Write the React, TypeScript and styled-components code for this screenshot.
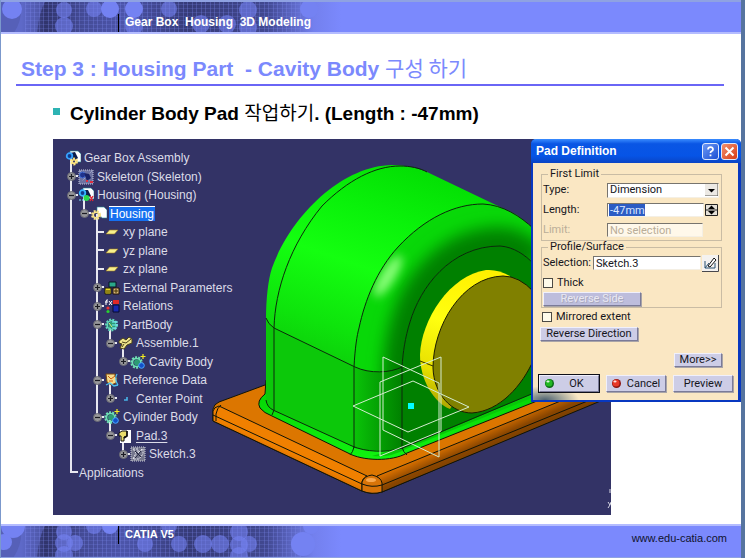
import React, { useState } from "react";
import styled, { createGlobalStyle, css } from "styled-components";

const GlobalStyle = createGlobalStyle`
  *, *::before, *::after { box-sizing: border-box; }
  body {
    margin: 0;
    background: #fff;
    font-family: "Liberation Sans", "Noto Sans CJK KR", sans-serif;
  }
`;

/* ---------- slide frame ---------- */

const Slide = styled.div`
  display: flex;
  flex-direction: column;
  min-height: 100vh;
  background: #fff;
  border-left: 1px solid #7b98cc;
  border-right: 4px solid #56749f;
`;

const band = css`
  display: grid;
  height: 34px;
  flex: none;
  background: #7b89fd;
  overflow: hidden;
  > * { grid-area: 1 / 1; }
`;

const Header = styled.header`
  ${band}
  border-top: 2px solid #8fa2e2;
  border-bottom: 2px solid #b4bcff;
`;

const Footer = styled.footer`
  ${band}
  margin-top: auto;
  border-top: 2px solid #b4bcff;
  border-bottom: 1px solid #8fa2e2;
`;

const BandArt = styled.svg`
  display: block;
  width: 340px;
  height: 32px;
`;

const BandContent = styled.div`
  z-index: 1;
  display: flex;
  justify-content: space-between;
  padding: 0 14px 0 117px;
`;

const BandTitle = styled.p<{ $offset: number; $size: number }>`
  margin: ${(p) => p.$offset}px 0 0;
  padding-left: 6px;
  height: 18px;
  border-left: 1px solid #000;
  color: #fff;
  font-size: ${(p) => p.$size}px;
  line-height: 16px;
  font-weight: 700;
  white-space: pre;
`;

const SiteLink = styled.a`
  margin-top: 5px;
  color: #10132e;
  font-size: 11px;
  line-height: 14px;
  text-decoration: none;
`;

const TitleBar = styled.h1`
  margin: 18px 17px 0 15px;
  padding: 0 0 0 5px;
  height: 34px;
  border-bottom: 2px solid #6a66f6;
  color: #7b89fd;
  font-size: 21px;
  line-height: 30px;
  font-weight: 700;
  white-space: pre;
`;

const Korean = styled.span`
  font-family: "Noto Sans CJK KR", sans-serif;
  font-weight: 400;
`;

const Bullet = styled.h2`
  display: flex;
  align-items: center;
  gap: 10px;
  margin: 15px 0 0 52px;
  height: 24px;
  color: #000;
  font-size: 19px;
  line-height: 24px;
  font-weight: 700;
  white-space: pre;
  &::before {
    content: "";
    width: 7px;
    height: 7px;
    margin-bottom: 4px;
    background: #2db3b3;
  }
`;

const Stage = styled.main`
  position: relative;
  margin-top: 14px;
  margin-bottom: 9px;
`;

const Viewport = styled.section`
  position: relative;
  margin: 0 130px 0 52px;
  padding: 10px 0 33px 12px;
  background: #333366;
  overflow: hidden;
`;

const Scene = styled.svg`
  position: absolute;
  inset: 0;
  width: 100%;
  height: 100%;
`;

/* ---------- specification tree ---------- */

const Tree = styled.ul`
  position: relative;
  margin: 0;
  padding: 0;
  list-style: none;
  color: #dcdce8;
  font-size: 12px;
`;

const Row = styled.li`
  display: flex;
  align-items: center;
  height: 18px;
  &:nth-child(even) { height: 19px; }
`;

const Guide = styled.span<{ $up: boolean; $down: boolean; $tick: boolean }>`
  display: grid;
  place-items: center;
  width: 13px;
  height: 100%;
  flex: none;
  background-repeat: no-repeat;
  background-image: linear-gradient(#e8e8f0, #e8e8f0), linear-gradient(#e8e8f0, #e8e8f0);
  background-size:
    ${(p) => (p.$up ? "2px" : "0")} ${(p) => (p.$down ? "100%" : "10px")},
    ${(p) => (p.$tick ? "7px" : "0")} 2px;
  background-position: 5px 0, 100% 8px;
`;

const Handle = styled.button`
  display: block;
  width: 9px;
  height: 9px;
  padding: 0;
  border: 0;
  background: none;
  svg { display: block; }
`;

const IconCell = styled.span<{ $stem: boolean }>`
  width: 18px;
  height: 100%;
  display: flex;
  align-items: center;
  flex: none;
  background: linear-gradient(#e8e8f0, #e8e8f0) 5px 100% / ${(p) => (p.$stem ? "2px" : "0")} 9px no-repeat;
`;

const NodeName = styled.span<{ $selected?: boolean; $underlined?: boolean }>`
  padding: 0 1px;
  line-height: 14px;
  white-space: nowrap;
  ${(p) => p.$selected && css`background: #1670f0; color: #fff; border-top: 1px solid #fff;`}
  ${(p) => p.$underlined && css`text-decoration: underline; text-underline-offset: 2px;`}
`;

type IconName =
  | "assembly" | "skeleton" | "product" | "part" | "plane" | "params" | "relations"
  | "body" | "bodyPlus" | "assemble" | "geoset" | "point" | "pad" | "sketch";

const Gear = ({ x, y, r, c }: { x: number; y: number; r: number; c: string }) => (
  <g>
    <circle cx={x} cy={y} r={r} fill="none" stroke={c} strokeWidth="2" strokeDasharray="2 1.2" />
    <circle cx={x} cy={y} r={r - 1.2} fill="none" stroke={c} strokeWidth="1.6" />
  </g>
);

const Sheet = () => <path d="M5 1h8l3 3v8h-4L5 3z" fill="#fff" stroke="#2a8c94" strokeWidth=".6" />;

const icons: Record<IconName, React.ReactNode> = {
  assembly: (
    <>
      <Sheet />
      <path d="M5 3l5-1 3 6-4 3z" fill="#0b1d4a" />
      <circle cx="4.5" cy="6" r="2.8" fill="#123a8c" stroke="#36a3ff" strokeWidth="1.8" />
      <Gear x={9} y={11.5} r={3} c="#ffe680" />
    </>
  ),
  skeleton: (
    <>
      <path d="M1 1h14v14H1z" fill="#6d72a0" stroke="#c6c8de" strokeDasharray="1 1" />
      <path d="M2 2l12 12M14 2L4 12" stroke="#b0b4d4" strokeDasharray="1 1" />
      <circle cx="4.5" cy="6" r="3" fill="#20348e" stroke="#4a74d8" />
      <path d="M6 4l5 1 2 4-4 3z" fill="#1a2266" />
      <path d="M8 11h2v2H8zM12 12h3v2h-3z" fill="#e03040" />
    </>
  ),
  product: (
    <>
      <Sheet />
      <path d="M5 3h5l3 6-4 2z" fill="#0b1d4a" />
      <circle cx="4.5" cy="6" r="2.8" fill="#123a8c" stroke="#36b3ff" strokeWidth="1.8" />
      <circle cx="8.5" cy="11" r="3" fill="#28d850" />
      <path d="M12 9l3 5M15 9l-3 5" stroke="#e02838" strokeWidth="1.4" />
      <path d="M1 13h5" stroke="#7fe8ff" strokeDasharray="2 1" />
    </>
  ),
  part: (
    <>
      <path d="M6 1h7l3 3v8h-5L6 6z" fill="#fff" stroke="#2a8c94" strokeWidth=".6" />
      <Gear x={5} y={9} r={4} c="#f6e28a" />
    </>
  ),
  plane: <path d="M5.5 6H14l-3.500 4H2z" fill="#f8f08c" stroke="#9a7a20" strokeWidth=".6" />,
  params: (
    <>
      <path d="M5 2h7v5H5z" fill="#2aa88a" stroke="#081420" />
      <path d="M1 8h6v6H1z" fill="#e6d828" stroke="#201c04" />
      <path d="M9 8h6v6H9z" fill="#d8b878" stroke="#201004" />
      <path d="M3 10v3M5 10v3M11 10h2v2h-2z" stroke="#403000" fill="none" />
    </>
  ),
  relations: (
    <>
      <path d="M4 2Q2 1 2 4v3M1 4h3M5 3l3 4M8 3L5 7" stroke="#fff" fill="none" />
      <path d="M9 2h6v4H9z" fill="#e02828" />
      <path d="M9 7h6v7H9z" fill="#1828b0" stroke="#070a30" />
      <circle cx="4" cy="10" r="1.6" fill="#f03030" />
      <circle cx="4" cy="13.5" r="1.6" fill="#28d030" />
    </>
  ),
  body: (
    <>
      <Gear x={7.5} y={8} r={5.4} c="#5fd6b8" />
      <circle cx="8" cy="8" r="3.6" fill="#2c9c74" />
      <path d="M8 5h6M8 8h6M8 11h5" stroke="#7df0ff" strokeWidth="1.2" />
      <path d="M5 6l3 4" stroke="#e0f080" />
    </>
  ),
  bodyPlus: (
    <>
      <Gear x={6.5} y={8.5} r={5.2} c="#6fe0b4" />
      <circle cx="7" cy="8.5" r="3" fill="#2c9c74" />
      <circle cx="11.5" cy="11.5" r="2.8" fill="#1450c8" stroke="#4aa8ff" />
      <path d="M13 0v5M10.500 2.500h5" stroke="#f4ec20" strokeWidth="1.2" />
    </>
  ),
  assemble: (
    <>
      <path d="M2 6l4-3 3 2 3-3 3 2v4l-5 2-3 4-4-1 2-4-3-1z" fill="#efe48c" stroke="#4a4218" />
      <path d="M5 7l4 1 5-4M7 9l-2 3" stroke="#4a4218" fill="none" />
    </>
  ),
  geoset: (
    <>
      <path d="M2 2h9v3l2 1-1 5-5 2-4-3z" fill="#f6dc8c" stroke="#7c4a10" />
      <path d="M4 4l3 3 4-3M5 9h4" stroke="#d06010" fill="none" />
      <path d="M13 2q-3 5 1 11M2 13l4-2 4 3 4-1" stroke="#4cc0f0" fill="none" strokeWidth="1.3" />
    </>
  ),
  point: <path d="M10 6v3H7" stroke="#48b4e8" strokeWidth="1.6" fill="none" />,
  pad: (
    <>
      <path d="M3 2h11v13H3z" fill="#fff" />
      <path d="M2 5l3-2h5v5l-3 1v4H4V8H2z" fill="#eadf6c" stroke="#111" />
      <path d="M10 3v5l-3 2" stroke="#111" strokeWidth="1.6" fill="none" />
    </>
  ),
  sketch: (
    <>
      <path d="M1 1h14v14H1z" fill="#74768c" stroke="#d0d0dc" strokeDasharray="1 1" />
      <path d="M3 3h5v4l5-4v5l-4 5H3l3-6zM3 13l9-10" fill="none" stroke="#e8e8f0" strokeDasharray="2 1" />
      <path d="M5 5l6 6M11 5L5 12" stroke="#20223c" />
    </>
  ),
};

interface TreeNode {
  name: string;
  depth: number;
  icon?: IconName;
  handle?: "plus" | "minus";
}

const nodes: TreeNode[] = [
  { name: "Gear Box Assembly", depth: 0, icon: "assembly" },
  { name: "Skeleton (Skeleton)", depth: 1, icon: "skeleton", handle: "plus" },
  { name: "Housing (Housing)", depth: 1, icon: "product", handle: "minus" },
  { name: "Housing", depth: 2, icon: "part", handle: "minus" },
  { name: "xy plane", depth: 3, icon: "plane" },
  { name: "yz plane", depth: 3, icon: "plane" },
  { name: "zx plane", depth: 3, icon: "plane" },
  { name: "External Parameters", depth: 3, icon: "params", handle: "plus" },
  { name: "Relations", depth: 3, icon: "relations", handle: "plus" },
  { name: "PartBody", depth: 3, icon: "body", handle: "minus" },
  { name: "Assemble.1", depth: 4, icon: "assemble", handle: "minus" },
  { name: "Cavity Body", depth: 5, icon: "bodyPlus", handle: "plus" },
  { name: "Reference Data", depth: 3, icon: "geoset", handle: "minus" },
  { name: "Center Point", depth: 4, icon: "point", handle: "plus" },
  { name: "Cylinder Body", depth: 3, icon: "bodyPlus", handle: "minus" },
  { name: "Pad.3", depth: 4, icon: "pad", handle: "minus" },
  { name: "Sketch.3", depth: 5, icon: "sketch", handle: "plus" },
  { name: "Applications", depth: 1 },
];

/* True when the branch at the given depth goes on below a row. */
const continues = (row: number, depth: number) => {
  for (let i = row + 1; i < nodes.length; i++) {
    if (nodes[i].depth < depth) return false;
    if (nodes[i].depth === depth) return true;
  }
  return false;
};

const SpecTree = () => (
  <Tree aria-label="Specification tree">
    {nodes.map((n, row) => (
      <Row key={row}>
        {Array.from({ length: n.depth }, (_, i) => {
          const own = i === n.depth - 1;
          const more = continues(row, i + 1);
          return (
            <Guide key={i} $up={own || more} $down={more} $tick={own}>
              {own && n.handle && (
                <Handle type="button" aria-label={`${n.handle === "plus" ? "Expand" : "Collapse"} ${n.name}`}>
                  <svg width="9" height="9" viewBox="0 0 9 9">
                    <circle cx="4.5" cy="4.5" r="4" fill="#96969a" stroke="#6a6a72" />
                    <path d={n.handle === "plus" ? "M2 4.500h5M4.500 2v5" : "M2 4.500h5"} stroke="#1c1c24" strokeWidth="1.2" />
                  </svg>
                </Handle>
              )}
            </Guide>
          );
        })}
        {n.icon && (
          <IconCell $stem={nodes[row + 1]?.depth > n.depth}>
            <svg width="16" height="16" viewBox="0 0 16 16">{icons[n.icon]}</svg>
          </IconCell>
        )}
        <NodeName $selected={n.name === "Housing"} $underlined={n.name === "Pad.3"}>
          {n.name}
        </NodeName>
      </Row>
    ))}
  </Tree>
);

/* ---------- 3D model ---------- */

const OUTER = "M354 448V367C355 348 357 335 359 328C365 300 377 270 398 247C425 218 455 204 483 204C503 205 520 216 534 229";
const INNER = "M402 449V367C403 352 405 338 410 322C420 288 450 246 500 246C514 247 525 255 534 264";
const FILLET = `${OUTER}V264C525 255 514 247 500 246C450 246 420 288 410 322C405 338 403 352 402 367V449C385 453 365 451 354 448Z`;

const Model = () => (
  <Scene viewBox="53 139 558 376" preserveAspectRatio="xMinYMin meet" role="img" aria-label="Gear box housing model">
    <defs>
      <linearGradient id="arch" gradientUnits="userSpaceOnUse" x1="400" y1="165" x2="330" y2="370">
        <stop offset="0" stopColor="#04e004" />
        <stop offset=".25" stopColor="#0af20a" />
        <stop offset=".5" stopColor="#14ff10" />
        <stop offset=".8" stopColor="#0ee40c" />
        <stop offset="1" stopColor="#0ccc0a" />
      </linearGradient>
      <linearGradient id="corner" gradientUnits="userSpaceOnUse" x1="354" y1="0" x2="402" y2="0">
        <stop offset="0" stopColor="#0ac408" />
        <stop offset=".35" stopColor="#06ac05" />
        <stop offset="1" stopColor="#008000" />
      </linearGradient>
      <linearGradient id="foot" gradientUnits="userSpaceOnUse" x1="0" y1="400" x2="0" y2="460">
        <stop offset="0" stopColor="#06d806" />
        <stop offset="1" stopColor="#10f410" />
      </linearGradient>
      <linearGradient id="leftEdge" gradientUnits="userSpaceOnUse" x1="284" y1="450" x2="280" y2="459">
        <stop offset="0" stopColor="#f08000" />
        <stop offset="1" stopColor="#d06a00" />
      </linearGradient>
      <linearGradient id="rightEdge" gradientUnits="userSpaceOnUse" x1="470" y1="436" x2="478" y2="454">
        <stop offset="0" stopColor="#d87000" />
        <stop offset=".6" stopColor="#8a4600" />
        <stop offset="1" stopColor="#7c4000" />
      </linearGradient>
      <linearGradient id="ring" gradientUnits="userSpaceOnUse" x1="480" y1="270" x2="440" y2="410">
        <stop offset="0" stopColor="#fff000" />
        <stop offset=".4" stopColor="#ffff10" />
        <stop offset=".75" stopColor="#e8e000" />
        <stop offset="1" stopColor="#a8a000" />
      </linearGradient>
      <clipPath id="filletClip"><path d={FILLET} /></clipPath>
      <filter id="soft" x="-30%" y="-30%" width="160%" height="160%"><feGaussianBlur stdDeviation="8" /></filter>
      <filter id="glow" x="-60%" y="-60%" width="220%" height="220%"><feGaussianBlur stdDeviation="5" /></filter>
    </defs>

    <g stroke="#101408" strokeLinejoin="round">
      <path d="M219 402L265 385L300 370H560L603 399L382 492Q372 495 362 491L213 421V409Q214 404 219 402Z" fill="#dc7600" />
      <path d="M219 406L367 476Q361 479 362 485V491L213 421V411Q214 407 219 406Z" fill="url(#leftEdge)" />
      <path d="M377 476L563 400H603L382 492Z" fill="url(#rightEdge)" />
      <path d="M362 491V482Q364 476 372 475Q381 477 382 483V492Q372 495 362 491Z" fill="#d87408" />
      <path d="M213 415L362 484Q372 488 382 485L590 400M216 421V414Q217 408 221 405" fill="none" />
    </g>
    <ellipse cx="371" cy="480" rx="5" ry="2" fill="#f8a850" />

    <path d="M265 394Q256 401 260 408Q264 413 272 416L348 453C362 461 392 462 407 453L542 399V380H266Z" fill="url(#foot)" stroke="#101408" />
    <path d="M372 456Q390 458 406 449L534 397V392L402 447Z" fill="#08c808" />

    <path d="M266 400V318C266 300 268 280 272 268C290 218 340 166 392 165C405 165 418 168 427 172L517 215L534 229V393L402 448C387 453 365 452 352 446L273 410Q267 407 266 400Z" fill="url(#arch)" />
    <path d="M266 318Q268 324 274 328L354 367V447L273 410Q267 407 266 400Z" fill="#0cc80a" />
    <path d={FILLET} fill="#08d808" />
    <g clipPath="url(#filletClip)">
      <path d={INNER} fill="none" stroke="#008000" strokeWidth="38" filter="url(#soft)" />
      <ellipse cx="388" cy="276" rx="7" ry="24" transform="rotate(32 388 276)" fill="#8cff7c" filter="url(#glow)" />
      <path d="M354 367Q382 378 402 367V449Q380 453 354 448Z" fill="url(#corner)" />
    </g>
    <path d="M402 449V367C403 352 405 338 410 322C420 288 450 246 500 246C514 247 525 255 534 264V393Z" fill="#008000" />

    <g fill="none" stroke="#0c280c">
      <path d="M272 415L274 410V328C275 290 290 245 322 206C348 180 375 166 400 166C410 166 420 168 427 172" />
      <path d={OUTER} />
      <path d="M354 447Q353 452 350 455M402 447Q403 452 407 455" />
      <path d={INNER} />
      <path d="M266 318Q268 324 274 328L355 367C370 374 390 373 402 367" />
      <path d="M266 400Q267 407 273 410L352 446C365 452 387 453 402 448L534 393" />
    </g>

    <path d="M510 276Q498 269 486 270C450 275 421 320 420 355C420 380 434 403 450 409L490 350Z" fill="url(#ring)" />
    <path d="M503 276C462 277 433 326 433 368C434 395 452 413 472 413C500 411 522 386 534 359V292Q519 276 503 276Z" fill="#808000" stroke="#1c1c00" />
    <path d="M420 361L433 366" stroke="#303000" />

    <g fill="none" stroke="#d4ecd0">
      <path d="M353 406L413 381L469 407L408 432Z" />
      <path d="M383 357L439 383V457L383 430Z" />
      <path d="M380 382L441 357V431L380 456Z" />
    </g>
    <path d="M408 403h6v6h-6z" fill="#00ffff" />
    <path d="M610 489v4M608 502l2 3 1-3M610 505l-2 3" stroke="#d8d8e4" fill="none" />
  </Scene>
);

/* ---------- dialog ---------- */

const Dialog = styled.form`
  position: absolute;
  top: 0;
  right: 0;
  width: 210px;
  display: flex;
  flex-direction: column;
  border: solid #0838c0;
  border-width: 0 3px 2px 2px;
  border-radius: 5px 5px 0 0;
  background: radial-gradient(ellipse 34px 14px at 12px 100%, #4d6170 0, #a3a79c 50%, transparent 100%), #fae7c3;
  color: #16161c;
  font-family: Roboto, "Liberation Sans", sans-serif;
  font-size: 11px;
  line-height: 12px;
  input, select, button { font: inherit; color: inherit; margin: 0; }
`;

const Caption = styled.header`
  display: flex;
  align-items: center;
  gap: 2px;
  height: 24px;
  flex: none;
  margin: 0 -3px 0 -2px;
  padding: 0 3px 0 5px;
  border-radius: 5px 5px 0 0;
  background: linear-gradient(#3a8cff, #0a56e4 20%, #0654e6 70%, #0a44c4);
  h3 {
    flex: 1;
    margin: 0;
    color: #fff;
    font: 700 12px/16px "Liberation Sans", sans-serif;
  }
`;

const CaptionButton = styled.button<{ $close?: boolean }>`
  display: grid;
  place-items: center;
  width: 17px;
  height: 17px;
  padding: 0;
  border: 1px solid #dfe8fc;
  border-radius: 3px;
  background: ${(p) => (p.$close ? "linear-gradient(135deg, #f09070, #d83c14)" : "linear-gradient(135deg, #6c98f4, #1c50d4)")};
`;

const Content = styled.div`
  display: flex;
  flex-direction: column;
  padding: 5px 5px 8px 6px;
`;

const Group = styled.fieldset`
  margin: 0 11px 0 2px;
  padding: 0;
  min-width: 0;
  border: 1px solid #c9bca4;
  legend {
    margin-left: 6px;
    padding: 0 2px;
    line-height: 12px;
  }
`;

const Field = styled.div<{ $label?: number; $disabled?: boolean }>`
  display: grid;
  grid-template-columns: ${(p) => p.$label ?? 64}px 1fr;
  align-items: center;
  height: 20px;
  padding: 0 2px 0 1px;
  color: ${(p) => (p.$disabled ? "#b9ad98" : "inherit")};
`;

const sunken = css`
  border: 1px solid;
  border-color: #77746e #f4efe4 #f4efe4 #77746e;
  border-radius: 0;
  background: #fff;
`;

const TextBox = styled.input`
  ${sunken}
  min-width: 0;
  width: 100%;
  height: 14px;
  padding: 0 2px;
  &:disabled { background: #fff8ea; color: #b9ad98; }
`;

const SelectedBox = styled(TextBox)`
  background: linear-gradient(#2c5cc4, #2c5cc4) 1px 0 / 36px 100% no-repeat #fff;
  && { color: #dce8ff; }
`;

const Combo = styled.div`
  display: grid;
  > * { grid-area: 1 / 1; }
  select {
    ${sunken}
    appearance: none;
    width: 100%;
    height: 15px;
    padding: 0 2px;
    line-height: 12px;
  }
  svg {
    justify-self: end;
    align-self: center;
    margin-right: 1px;
    pointer-events: none;
  }
`;

const Inline = styled.div<{ $end?: number }>`
  display: flex;
  align-items: center;
  gap: 1px;
  padding-right: ${(p) => p.$end ?? 0}px;
`;

const TinyButton = styled.button`
  display: block;
  flex: none;
  padding: 0;
  border: 0;
  background: none;
  svg { display: block; }
`;

const Check = styled.label<{ $indent: number }>`
  display: flex;
  align-items: center;
  gap: 4px;
  height: 14px;
  padding-left: ${(p) => p.$indent}px;
  input {
    appearance: none;
    width: 10px;
    height: 10px;
    border: 1px solid #4c4a44;
    background: #fffbea;
  }
  input:checked { background: #2c5cc4; }
`;

const PushButton = styled.button<{ $width: number; $tall?: boolean; $primary?: boolean }>`
  display: flex;
  align-items: center;
  justify-content: center;
  width: ${(p) => p.$width}px;
  height: ${(p) => (p.$tall ? 17 : 14)}px;
  padding: 0;
  border: 1px solid;
  border-color: #f0f0fc #7a7a98 #7a7a98 #f0f0fc;
  border-radius: 0;
  background: #cdcde6;
  box-shadow: ${(p) => (p.$primary ? "0 0 0 1px #101018" : "1px 1px 0 #a8a4a8")};
  line-height: 12px;
  svg { margin-right: auto; margin-left: 4px; }
  span { margin-right: auto; }
  &:disabled { background: #bdbddc; color: #e9e8f2; text-shadow: 1px 1px 0 #a8a8bc; }
`;

const ButtonRow = styled.div`
  display: flex;
  justify-content: space-between;
  margin-top: 8px;
`;

const ButtonSlot = styled.div`
  padding: 2px 0 1px 1px;
`;

const MoreSlot = styled.div`
  display: flex;
  justify-content: flex-end;
  margin-top: 11px;
  padding-right: 11px;
`;

const Spacer = styled.div<{ $h: number }>`
  height: ${(p) => p.$h}px;
`;

const Lamp = ({ color, dark }: { color: string; dark: string }) => (
  <svg width="11" height="11" viewBox="0 0 11 11">
    <circle cx="5.5" cy="5.5" r="4.5" fill={dark} />
    <circle cx="5" cy="5" r="3.5" fill={color} />
    <ellipse cx="4" cy="3.5" rx="1.6" ry="1" fill="#fff" opacity=".85" />
  </svg>
);

const PadDefinition = () => {
  const [length, setLength] = useState("-47mm");
  const [selection, setSelection] = useState("Sketch.3");
  return (
    <Dialog aria-label="Pad Definition" onSubmit={(e) => e.preventDefault()}>
      <Caption>
        <h3>Pad Definition</h3>
        <CaptionButton type="button" aria-label="Help">
          <svg width="11" height="11" viewBox="0 0 11 11">
            <path d="M3 3.500Q3.200 1.200 5.500 1.200T8 3.300Q8 4.600 6.500 5.300Q5.500 5.800 5.500 7M5.500 8.400v1.800" fill="none" stroke="#fff" strokeWidth="1.8" />
          </svg>
        </CaptionButton>
        <CaptionButton type="button" $close aria-label="Close">
          <svg width="11" height="11" viewBox="0 0 11 11">
            <path d="M1.500 1.500l8 8M9.500 1.500l-8 8" stroke="#fff" strokeWidth="2" />
          </svg>
        </CaptionButton>
      </Caption>
      <Content>
        <Group>
          <legend>First Limit</legend>
          <Field>
            <label htmlFor="type">Type:</label>
            <Combo>
              <select id="type" defaultValue="Dimension">
                <option>Dimension</option>
              </select>
              <svg width="13" height="12" viewBox="0 0 13 12">
                <path d="M0 0h13v12H0z" fill="#ece9e4" />
                <path d="M0 12h13V0" fill="none" stroke="#55534e" />
                <path d="M3 5h7L6.500 8.500z" fill="#000" />
              </svg>
            </Combo>
          </Field>
          <Field>
            <label htmlFor="length">Length:</label>
            <Inline $end={1}>
              <SelectedBox id="length" value={length} onChange={(e) => setLength(e.target.value)} />
              <TinyButton type="button" aria-label="Step length">
                <svg width="13" height="12" viewBox="0 0 13 12">
                  <path d="M.500.500h12v11H.500zM.500 6h12" fill="#e4e0d8" stroke="#222" />
                  <path d="M3 5l3.500-3.500L10 5zM3 7h7l-3.500 3.500z" fill="#000" />
                </svg>
              </TinyButton>
            </Inline>
          </Field>
          <Field $disabled>
            <label htmlFor="limit">Limit:</label>
            <Inline $end={16}>
              <TextBox id="limit" disabled value="No selection" readOnly />
            </Inline>
          </Field>
        </Group>
        <Group>
          <legend>Profile/Surface</legend>
          <Field $label={50}>
            <label htmlFor="selection">Selection:</label>
            <Inline>
              <TextBox id="selection" value={selection} onChange={(e) => setSelection(e.target.value)} />
              <TinyButton type="button" aria-label="Edit sketch">
                <svg width="17" height="17" viewBox="0 0 17 17">
                  <path d="M0 0h17v17H0z" fill="#f4f2f0" />
                  <path d="M0 16.500h16.500V0" fill="none" stroke="#48484c" />
                  <path d="M3 6v7h10V8M3 13l4-5" fill="none" stroke="#285070" />
                  <path d="M6 11l6-8 2 2-6 7z" fill="#fff" stroke="#111" />
                </svg>
              </TinyButton>
            </Inline>
          </Field>
          <Spacer $h={3} />
          <Check $indent={1}>
            <input type="checkbox" />Thick
          </Check>
          <ButtonSlot>
            <PushButton type="button" $width={98} disabled>Reverse Side</PushButton>
          </ButtonSlot>
        </Group>
        <Spacer $h={2} />
        <Check $indent={3}>
          <input type="checkbox" />Mirrored extent
        </Check>
        <Spacer $h={1} />
        <ButtonSlot>
          <PushButton type="button" $width={98}>Reverse Direction</PushButton>
        </ButtonSlot>
        <MoreSlot>
          <PushButton type="button" $width={48}>More&gt;&gt;</PushButton>
        </MoreSlot>
        <ButtonRow>
          <PushButton type="submit" $width={60} $tall $primary>
            <Lamp color="#22b822" dark="#0a6a14" />
            <span>OK</span>
          </PushButton>
          <PushButton type="button" $width={60} $tall>
            <Lamp color="#e83828" dark="#8a1410" />
            <span>Cancel</span>
          </PushButton>
          <PushButton type="button" $width={60} $tall>Preview</PushButton>
        </ButtonRow>
      </Content>
    </Dialog>
  );
};

/* ---------- band decoration ---------- */

const headerDots = [
  [11, 7, 10], [63, 8, 8], [63, 24, 9], [93, 7, 8], [109, 7, 9], [133, 7, 9], [133, 24, 9],
  [168, 7, 8], [200, 22, 9], [226, 22, 9], [247, 8, 9], [247, 25, 9], [308, 7, 9],
];
const footerDots = [
  [12, 0, 12], [3, 16, 8], [63, 6, 8], [63, 17, 9], [63, 29, 9], [74, 17, 8], [93, 0, 8], [109, 0, 8],
  [144, 18, 8], [168, 0, 8], [178, 18, 8], [202, 18, 9], [219, 18, 9], [238, 6, 9], [238, 19, 9],
  [238, 30, 9], [248, 18, 8], [302, 18, 12], [310, 0, 8],
];

const Decoration = ({ id, dots }: { id: string; dots: number[][] }) => (
  <BandArt viewBox="0 0 340 32" aria-hidden="true">
    <defs>
      <linearGradient id={`${id}-shade`}>
        <stop offset="0" stopColor="#5660b8" />
        <stop offset=".06" stopColor="#5660b8" />
        <stop offset=".13" stopColor="#30346c" />
        <stop offset=".24" stopColor="#444b96" />
        <stop offset=".36" stopColor="#4c55aa" />
        <stop offset=".55" stopColor="#363b78" />
        <stop offset=".78" stopColor="#414890" />
        <stop offset=".92" stopColor="#7380ee" />
        <stop offset="1" stopColor="#7b89fd" />
      </linearGradient>
      <pattern id={`${id}-lines`} width="9" height="4" patternUnits="userSpaceOnUse">
        <path d="M2.500 0v4M6.500 0v4" stroke="#7d8af0" strokeOpacity=".3" />
        <path d="M0 2.500h9" stroke="#7d8af0" strokeOpacity=".2" />
      </pattern>
    </defs>
    <path d="M0 0h340v32H0z" fill={`url(#${id}-shade)`} />
    <path d="M20 0h24Q38 10 36 32H12Q22 18 20 0z" fill="#6672d8" opacity=".5" />
    <path d="M24 0h276v32H24z" fill={`url(#${id}-lines)`} />
    {dots.map(([x, y, r], i) => (
      <circle key={i} cx={x} cy={y} r={r} fill="#7482f2" opacity={x < 20 || x > 300 || (x > 100 && x < 140 && y < 10) ? 1 : 0.6} />
    ))}
  </BandArt>
);

export default function App() {
  return (
    <>
      <GlobalStyle />
      <Slide>
        <Header>
          <Decoration id="head" dots={headerDots} />
          <BandContent>
            <BandTitle $offset={12} $size={12}>Gear Box  Housing  3D Modeling</BandTitle>
          </BandContent>
        </Header>
        <TitleBar>
          Step 3 : Housing Part{"  "}- Cavity Body <Korean>구성 하기</Korean>
        </TitleBar>
        <Bullet>
          <span>
            Cylinder Body Pad <Korean>작업하기</Korean>. (Length : -47mm)
          </span>
        </Bullet>
        <Stage>
          <Viewport>
            <Model />
            <SpecTree />
          </Viewport>
          <PadDefinition />
        </Stage>
        <Footer>
          <Decoration id="foot-band" dots={footerDots} />
          <BandContent>
            <BandTitle $offset={0} $size={11}>CATIA V5</BandTitle>
            <SiteLink href="#">www.edu-catia.com</SiteLink>
          </BandContent>
        </Footer>
      </Slide>
    </>
  );
}
